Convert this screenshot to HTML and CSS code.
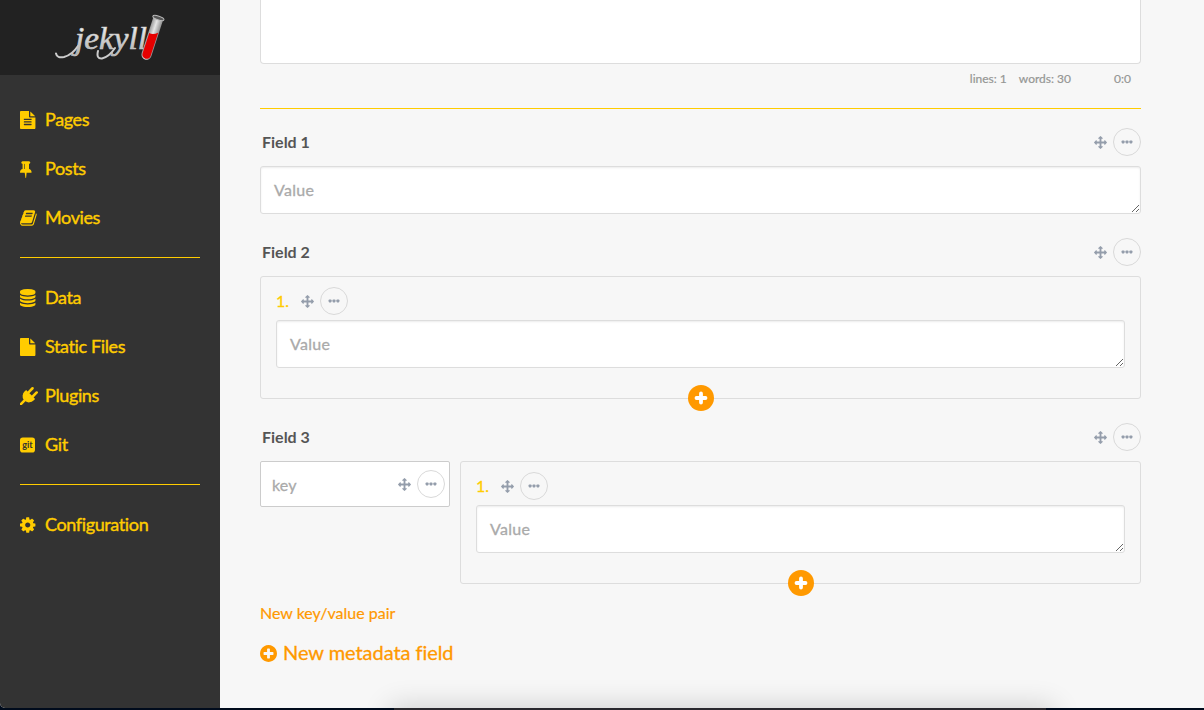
FILE: index.html
```html
<!DOCTYPE html>
<html lang="en">
<head>
<meta charset="utf-8">
<title>Jekyll Admin</title>
<link rel="stylesheet" href="styles.css">
</head>
<body>
<svg class="sprite" aria-hidden="true">
  <symbol id="file-text" viewBox="128 0 1792 1792"><path d="M1596 476q14 14 28 36h-472v-472q22 14 36 28zm-476 164h544v1056q0 40-28 68t-68 28h-1344q-40 0-68-28t-28-68v-1600q0-40 28-68t68-28h800v544q0 40 28 68t68 28zm160 736v-64q0-14-9-23t-23-9h-704q-14 0-23 9t-9 23v64q0 14 9 23t23 9h704q14 0 23-9t9-23zm0-256v-64q0-14-9-23t-23-9h-704q-14 0-23 9t-9 23v64q0 14 9 23t23 9h704q14 0 23-9t9-23zm0-256v-64q0-14-9-23t-23-9h-704q-14 0-23 9t-9 23v64q0 14 9 23t23 9h704q14 0 23-9t9-23z"/></symbol>
  <symbol id="pin" viewBox="320 0 1792 1792"><path d="M800 864v-448q0-14-9-23t-23-9-23 9-9 23v448q0 14 9 23t23 9 23-9 9-23zm672 352q0 26-19 45t-45 19h-429l-51 483q-2 12-10.5 20.5t-20.5 8.5h-1q-27 0-32-27l-76-485h-404q-26 0-45-19t-19-45q0-123 78.5-221.5t177.5-98.5v-512q-52 0-90-38t-38-90 38-90 90-38h640q52 0 90 38t38 90-38 90-90 38v512q99 0 177.5 98.5t78.5 221.5z"/></symbol>
  <symbol id="book" viewBox="64 0 1792 1792"><path d="M1703 478q40 57 18 129l-275 906q-19 64-76.5 107.5t-122.5 43.5h-923q-77 0-148.5-53.5t-99.5-131.5q-24-67-2-127 0-4 3-27t4-37q1-8-3-21.5t-3-19.5q2-11 8-21t16.5-23.5 16.5-23.5q23-38 45-91.5t30-91.5q3-10 .5-30t-.5-28q3-11 17-28t17-23q21-36 42-92t25-90q1-9-2.5-32t.5-28q4-13 22-30.5t22-22.5q19-26 42.5-84.5t27.5-96.5q1-8-3-25.5t-2-26.5q2-8 9-18t18-23 17-21q8-12 16.5-30.5t15-35 16-36 19.5-32 26.5-23.5 36-11.5 47.5 5.5l-1 3q38-9 51-9h761q74 0 114 56t18 130l-274 906q-36 119-71.5 153.5t-128.5 34.5h-869q-27 0-38 15-11 16-1 43 24 70 144 70h923q29 0 56-15.5t35-41.5l300-987q7-22 5-57 38 15 59 43zm-1064 2q-4 13 2 22.5t20 9.5h608q13 0 25.5-9.5t16.5-22.5l21-64q4-13-2-22.5t-20-9.5h-608q-13 0-25.5 9.5t-16.5 22.5zm-83 256q-4 13 2 22.5t20 9.5h608q13 0 25.5-9.5t16.5-22.5l21-64q4-13-2-22.5t-20-9.5h-608q-13 0-25.5 9.5t-16.5 22.5z"/></symbol>
  <symbol id="database" viewBox="128 0 1792 1792"><path d="M896 768q237 0 443-43t325-127v170q0 69-103 128t-280 93.5-385 34.5-385-34.5-280-93.5-103-128v-170q119 84 325 127t443 43zm0 768q237 0 443-43t325-127v170q0 69-103 128t-280 93.5-385 34.5-385-34.5-280-93.5-103-128v-170q119 84 325 127t443 43zm0-384q237 0 443-43t325-127v170q0 69-103 128t-280 93.5-385 34.5-385-34.5-280-93.5-103-128v-170q119 84 325 127t443 43zm0-1152q208 0 385 34.5t280 93.5 103 128v128q0 69-103 128t-280 93.5-385 34.5-385-34.5-280-93.5-103-128v-128q0-69 103-128t280-93.5 385-34.5z"/></symbol>
  <symbol id="file" viewBox="128 0 1792 1792"><path d="M1152 512v-472q22 14 36 28l408 408q14 14 28 36h-472zm-128 32q0 40 28 68t68 28h544v1056q0 40-28 68t-68 28h-1344q-40 0-68-28t-28-68v-1600q0-40 28-68t68-28h800v544z"/></symbol>
  <symbol id="plug" viewBox="0 0 1792 1792"><path d="M1755 453q37 38 37 90.5t-37 90.5l-401 400 150 150-160 160q-163 163-389.5 186.5t-411.5-100.5l-362 362h-181v-181l362-362q-124-185-100.5-411.5t186.5-389.5l160-160 150 150 400-401q38-37 91-37t90 37 37 90.5-37 90.5l-400 401 234 234 401-400q38-37 91-37t90 37z"/></symbol>
  <symbol id="cog" viewBox="128 0 1792 1792"><path d="M1152 896q0-106-75-181t-181-75-181 75-75 181 75 181 181 75 181-75 75-181zm512-109v222q0 12-8 23t-20 13l-185 28q-19 54-39 91 35 50 107 138 10 12 10 25t-9 23q-27 37-99 108t-94 71q-12 0-26-9l-138-108q-44 23-91 38-16 136-29 186-7 28-36 28h-222q-14 0-24.5-8.5t-11.5-21.5l-28-184q-49-16-90-37l-141 107q-10 9-25 9-14 0-25-11-126-114-165-168-7-10-7-23 0-12 8-23 15-21 51-66.5t54-70.5q-27-50-41-99l-183-27q-13-2-21-12.5t-8-23.5v-222q0-12 8-23t19-13l186-28q14-46 39-92-40-57-107-138-10-12-10-24 0-10 9-23 26-36 98.5-107.5t94.5-71.5q13 0 26 10l138 107q44-23 91-38 16-136 29-186 7-28 36-28h222q14 0 24.5 8.5t11.5 21.5l28 184q49 16 90 37l142-107q9-9 24-9 13 0 25 10 129 119 165 170 7 8 7 22 0 12-8 23-15 21-51 66.5t-54 70.5q26 50 41 98l183 28q13 2 21 12.5t8 23.5z"/></symbol>
  <symbol id="arrows" viewBox="0 0 1792 1792"><path d="M1792 896q0 26-19 45l-256 256q-19 19-45 19t-45-19-19-45v-128h-384v384h128q26 0 45 19t19 45-19 45l-256 256q-19 19-45 19t-45-19l-256-256q-19-19-19-45t19-45 45-19h128v-384h-384v128q0 26-19 45t-45 19-45-19l-256-256q-19-19-19-45t19-45l256-256q19-19 45-19t45 19 19 45v128h384v-384h-128q-26 0-45-19t-19-45 19-45l256-256q19-19 45-19t45 19l256 256q19 19 19 45t-19 45-45 19h-128v384h384v-128q0-26 19-45t45-19 45 19l256 256q19 19 19 45z"/></symbol>
  <symbol id="dots" viewBox="0 0 12 12"><rect x="0.6" y="4.4" width="3" height="3" rx="0.8"/><rect x="4.5" y="4.4" width="3" height="3" rx="0.8"/><rect x="8.4" y="4.4" width="3" height="3" rx="0.8"/></symbol>
  <symbol id="plus-circle" viewBox="128 128 1536 1536"><path d="M1344 960v-128q0-26-19-45t-45-19h-256v-256q0-26-19-45t-45-19h-128q-26 0-45 19t-19 45v256h-256q-26 0-45 19t-19 45v128q0 26 19 45t45 19h256v256q0 26 19 45t45 19h128q26 0 45-19t19-45v-256h256q26 0 45-19t19-45zm320-64q0 209-103 385.5t-279.5 279.5-385.5 103-385.5-103-279.5-279.5-103-385.5 103-385.5 279.5-279.5 385.5-103 385.5 103 279.5 279.5 103 385.5z"/></symbol>
</svg>

<div class="window">
  <aside class="sidebar">
    <a class="logo">
      <svg width="110" height="48" viewBox="0 0 110 48">
        <defs>
          <linearGradient id="silver" x1="0" y1="0" x2="0" y2="1"><stop offset="0" stop-color="#fff"/><stop offset="1" stop-color="#aaa"/></linearGradient>
          <linearGradient id="glass" x1="0" y1="0" x2="1" y2="0"><stop offset="0" stop-color="#999"/><stop offset=".45" stop-color="#e6e6e6"/><stop offset="1" stop-color="#909090"/></linearGradient>
        </defs>
        <path d="M1 39.500q1 5 8 3.500Q17 41 23 32M43 37q-2 8 4 7.500Q54 43 60 34" fill="none" stroke="#ccc" stroke-width="2" stroke-linecap="round"/>
        <text class="logo-text" x="20" y="35" textLength="72" lengthAdjust="spacingAndGlyphs" fill="url(#silver)">jekyll</text>
        <g transform="rotate(18 97 24)">
          <path d="M91.800 3v38.500a5.100 5.100 0 0 0 10.200 0V3z" fill="url(#glass)"/>
          <path d="M92.800 20q4 1 8.400-3v24.500a4.200 4.200 0 0 1-8.400 0z" fill="#e60000"/>
          <ellipse cx="96.900" cy="3" rx="5.800" ry="1.900" fill="#555" stroke="#bbb"/>
        </g>
      </svg>
    </a>
    <nav class="nav">
      <ul class="nav-group">
        <li><svg class="icon"><use href="#file-text"/></svg><span>Pages</span></li>
        <li><svg class="icon"><use href="#pin"/></svg><span>Posts</span></li>
        <li><svg class="icon"><use href="#book"/></svg><span>Movies</span></li>
      </ul>
      <ul class="nav-group">
        <li><svg class="icon"><use href="#database"/></svg><span>Data</span></li>
        <li><svg class="icon"><use href="#file"/></svg><span>Static Files</span></li>
        <li><svg class="icon"><use href="#plug"/></svg><span>Plugins</span></li>
        <li><svg class="icon" viewBox="0 0 18 18"><rect y="1.500" width="15" height="15" rx="2.800"/><text class="git-text" x="7.500" y="11.800">git</text></svg><span>Git</span></li>
      </ul>
      <ul class="nav-group">
        <li><svg class="icon"><use href="#cog"/></svg><span>Configuration</span></li>
      </ul>
    </nav>
  </aside>

  <main class="content">
    <div class="editor"></div>
    <div class="statusbar"><span>lines: 1</span><span>words: 30</span><span class="cursor">0:0</span></div>
    <hr class="splitter">

    <section class="field">
      <header class="field-head"><h3>Field 1</h3><div class="tools"><svg class="move"><use href="#arrows"/></svg><button class="more"><svg><use href="#dots"/></svg></button></div></header>
      <textarea class="value" placeholder="Value"></textarea>
    </section>

    <section class="field">
      <header class="field-head"><h3>Field 2</h3><div class="tools"><svg class="move"><use href="#arrows"/></svg><button class="more"><svg><use href="#dots"/></svg></button></div></header>
      <div class="list">
        <div class="item-head"><span class="index">1.</span><div class="tools"><svg class="move"><use href="#arrows"/></svg><button class="more"><svg><use href="#dots"/></svg></button></div></div>
        <textarea class="value" placeholder="Value"></textarea>
        <button class="add"><svg viewBox="0 0 26 26"><path d="M13 8.500v9M8.500 13h9"/></svg></button>
      </div>
    </section>

    <section class="field">
      <header class="field-head"><h3>Field 3</h3><div class="tools"><svg class="move"><use href="#arrows"/></svg><button class="more"><svg><use href="#dots"/></svg></button></div></header>
      <div class="pair">
        <div class="key"><input type="text" placeholder="key"><div class="tools"><svg class="move"><use href="#arrows"/></svg><button class="more"><svg><use href="#dots"/></svg></button></div></div>
        <div class="list">
          <div class="item-head"><span class="index">1.</span><div class="tools"><svg class="move"><use href="#arrows"/></svg><button class="more"><svg><use href="#dots"/></svg></button></div></div>
          <textarea class="value" placeholder="Value"></textarea>
          <button class="add"><svg viewBox="0 0 26 26"><path d="M13 8.500v9M8.500 13h9"/></svg></button>
        </div>
      </div>
      <a class="new-pair">New key/value pair</a>
    </section>
    <a class="new-field"><svg><use href="#plus-circle"/></svg><span>New metadata field</span></a>
    <div class="dock-shadow"></div>
  </main>
</div>
<div class="dock-edge"></div>
</body>
</html>
```
FILE: styles.css
```css
* { box-sizing: border-box; }
body {
  margin: 0;
  height: 710px;
  overflow: hidden;
  background: #000b1c;
  font-family: Lato, "Liberation Sans", sans-serif;
  font-variant-ligatures: none;
  color: #555;
}
.sprite { position: absolute; width: 0; height: 0; }
.window {
  display: flex;
  height: 708px;
  overflow: hidden;
  border-bottom-left-radius: 5px;
  background: #f7f7f7;
}
.sidebar { width: 220px; flex: none; background: #333; }
.logo { display: flex; height: 75px; padding: 14px 0 0 55px; background: #222; }
.logo-text { font: italic 32px "Liberation Serif", serif; stroke: #ccc; stroke-width: 0.6px; }
.nav { padding: 20px 20px 0; }
.nav-group { margin: 0; padding: 0 0 15px; list-style: none; }
.nav-group + .nav-group { border-top: 1px solid #fc0; padding-top: 15px; }
.nav-group li {
  display: flex;
  align-items: center;
  height: 49px;
  font-size: 18px;
  letter-spacing: -0.38px;
  color: #fc0;
  -webkit-text-stroke: 0.4px #fc0;
}
.nav-group span { padding-bottom: 2px; }
.icon { width: 18px; height: 18px; margin-right: 7px; fill: #fc0; }
.git-text { font: bold 9px Lato, sans-serif; letter-spacing: 0; text-anchor: middle; fill: #333; -webkit-text-stroke: 0; }

.content { position: relative; flex: 1; padding: 0 63px 0 40px; }
.editor { height: 64px; border: 1px solid #ddd; border-top: 0; border-radius: 0 0 4px 4px; background: #fff; }
.statusbar {
  display: flex;
  justify-content: flex-end;
  gap: 12px;
  padding-right: 10px;
  height: 30px;
  line-height: 30px;
  font-size: 12px;
  color: #959694;
  -webkit-text-stroke: 0.2px;
}
.cursor { width: 48px; text-align: right; }
.splitter { height: 1px; margin: 14px 0 19px; border: 0; background: #fc0; }
.field { margin-bottom: 24px; }
.field-head { display: flex; justify-content: space-between; align-items: center; height: 28px; margin-bottom: 10px; padding-left: 2px; }
.field-head h3 { margin: 0; padding-bottom: 2px; font-size: 16px; font-weight: 700; color: #555; }
.tools { display: flex; align-items: center; gap: 6px; }
.move { width: 13px; height: 13px; fill: #949dab; }
.more { display: flex; align-items: center; justify-content: center; width: 28px; height: 28px; padding: 0; border: 1px solid #d9d9d9; border-radius: 50%; background: none; }
.more svg { width: 12px; height: 12px; fill: #949dab; }
.value {
  display: block;
  width: 100%;
  height: 48px;
  padding: 13px;
  border: 1px solid #ddd;
  border-radius: 3px;
  background: #fff;
  box-shadow: inset 0 1px 2px #ececec;
  font: 16px/20px Lato, sans-serif;
  letter-spacing: 0.3px;
  overflow: hidden;
}
.value::placeholder, .key input::placeholder { color: #aaa; -webkit-text-stroke: 0.3px #aaa; opacity: 1; }
.list { position: relative; flex: 1; height: 123px; padding: 10px 15px; border: 1px solid #ddd; border-radius: 3px; }
.item-head { display: flex; align-items: center; gap: 12px; height: 28px; margin-bottom: 5px; }
.index { padding-bottom: 2px; font-size: 16px; color: #fc0; -webkit-text-stroke: 0.3px; }
.add { position: absolute; left: 50%; bottom: -13px; width: 26px; height: 26px; margin-left: -13px; padding: 0; border: 0; border-radius: 50%; background: #f90; }
.add svg { display: block; width: 26px; height: 26px; stroke: #fff; stroke-width: 3.800; stroke-linecap: round; }
.pair { display: flex; align-items: flex-start; gap: 10px; }
.key { display: flex; align-items: center; justify-content: space-between; width: 190px; height: 46px; padding: 0 4px 0 11px; border: 1px solid #ccc; border-radius: 2px; background: #fff; }
.key input { width: 110px; padding: 1px 0 0; border: 0; background: none; font: 16px/20px Lato, sans-serif; letter-spacing: 0.2px; }
.new-pair { display: block; margin-top: 19px; font-size: 16px; line-height: 20px; color: #f90; -webkit-text-stroke: 0.2px; }
.new-field { display: flex; align-items: center; gap: 6px; margin-top: -8px; height: 28px; font-size: 20px; letter-spacing: -0.05px; color: #f90; -webkit-text-stroke: 0.3px; }
.new-field span { padding-bottom: 2px; }
.new-field svg { width: 17px; height: 17px; fill: #f90; }
.dock-shadow { position: absolute; left: 174px; top: 710px; width: 656px; height: 60px; box-shadow: 0 0 28px 4px rgba(0, 0, 0, 0.16); }
.dock-edge { width: 652px; height: 2px; margin-left: 394px; background: #2a292e; }
```
